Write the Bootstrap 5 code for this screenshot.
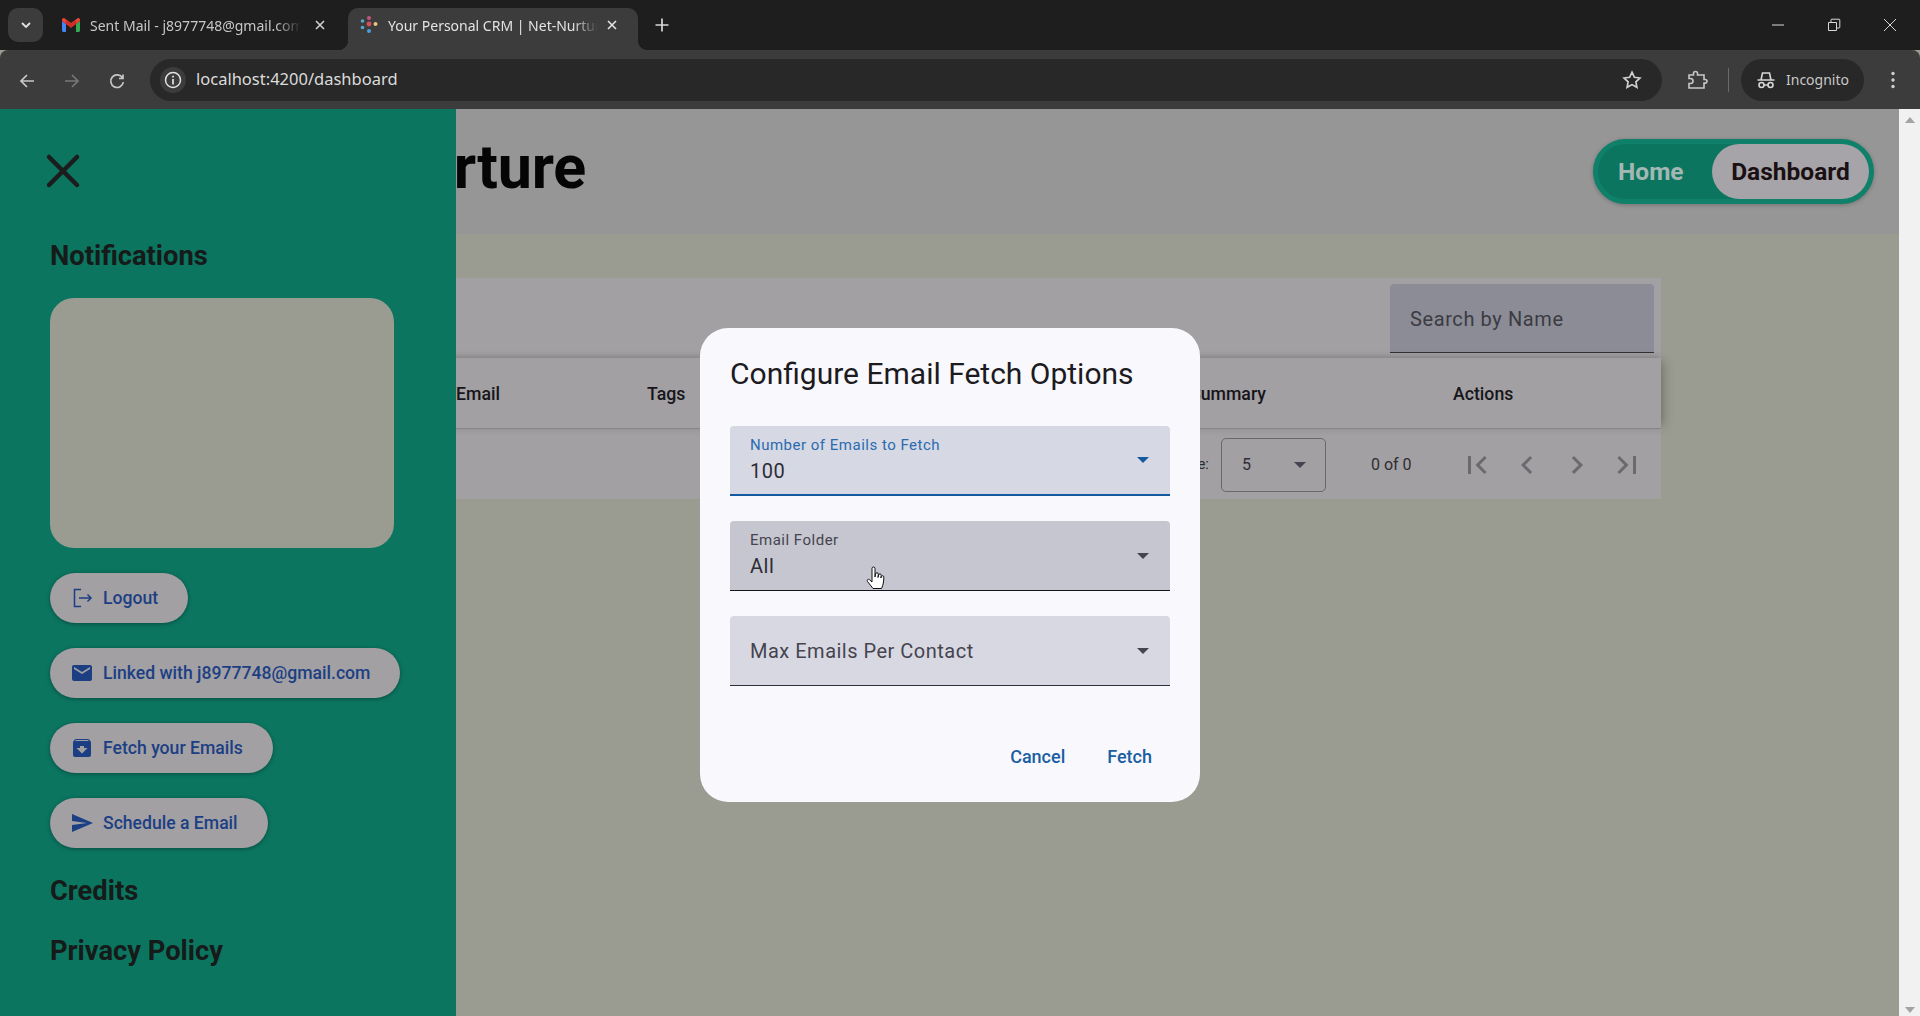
<!DOCTYPE html>
<html lang="en">
<head>
    <meta charset="UTF-8">
    <meta name="viewport" content="width=device-width, initial-scale=1.0">
    <title>Your Personal CRM | Net-Nurture</title>
    <link href="https://cdn.jsdelivr.net/npm/bootstrap@5.3.0/dist/css/bootstrap.min.css" rel="stylesheet">
    <style>
        html, body { height: 100%; overflow: hidden; }
        body { font-family: Roboto, "Liberation Sans", sans-serif; background: #9b9c91; }

        /* browser chrome */
        .tab-strip { height: 50px; background: #1e1e1e; font-family: "Noto Sans", "Open Sans", sans-serif; color: #c7c7c7; }
        .tab-search { width: 35px; height: 34px; margin: 8px 7px 0 8px; background: #3c3c3c; border-radius: 10px; }
        .tab-item { width: 290px; height: 42px; margin-top: 8px; padding: 0 12px 8px; font-size: 14px; white-space: nowrap; border-radius: 10px 10px 0 0; position: relative; }
        .tab-item.first-tab { width: 298px; padding-right: 14px; }
        .tab-item.first-tab .tab-title { margin-right: 13px; }
        .tab-item.current { background: #3c3c3c; color: #e3e3e3; }
        .tab-item.current::before, .tab-item.current::after { content: ""; position: absolute; bottom: 0; width: 10px; height: 10px; }
        .tab-item.current::before { left: -10px; background: radial-gradient(circle at 0 0, transparent 10px, #3c3c3c 10.5px); }
        .tab-item.current::after { right: -10px; background: radial-gradient(circle at 100% 0, transparent 10px, #3c3c3c 10.5px); }
        .tab-title { flex: 1; overflow: hidden; margin-left: 10px; margin-right: 8px; -webkit-mask-image: linear-gradient(90deg, #000 88%, transparent); mask-image: linear-gradient(90deg, #000 88%, transparent); }
        .new-tab { margin: 8px 0 8px 16px; }
        .win-ctrls { margin-right: 2px; }
        .win-btn { width: 56px; }
        .tool-row { height: 59px; background: #3c3c3c; border-radius: 8px 8px 0 0; color: #c7c7c7; font-family: "Noto Sans", "Open Sans", sans-serif; }
        .nav-glyph { width: 45px; }
        .omni { width: 1512px; height: 42px; margin-left: 11px; background: #282828; border-radius: 21px; padding: 0 20px 0 10px; }
        .omni-info { width: 26px; height: 26px; border-radius: 50%; background: #3c3c3c; }
        .omni-url { margin-left: 10px; font-size: 16.5px; color: #dcdcdc; }
        .tool-sep { width: 1px; height: 24px; background: #6a6a6a; margin: 0 12px 0 20px; }
        .incog { width: 123px; height: 42px; border-radius: 21px; background: #282828; font-size: 14px; margin-right: 20px; gap: 10px; padding-left: 15px; }

        /* page behind the dialog */
        .page-wrap { height: 907px; }
        .page-area { width: 1899px; position: relative; overflow: hidden; }
        .scroll-rail { width: 21px; background: #f1f1f1; padding: 8px 0 2px; }
        .top-band { height: 125px; background: #969696; padding-right: 25px; }
        .brand-name { margin: 0; padding-left: 257px; font-size: 61px; font-weight: 700; letter-spacing: -.2px; color: #050505; line-height: 1; padding-top: 28px; }
        .nav-pill-box { height: 65px; width: 281px; margin-top: 30px; background: #0c7560; border: 5px solid #0f8069; border-radius: 33px; box-shadow: 0 1px 4px rgba(0, 0, 0, .25); font-size: 24.5px; font-weight: 700; }
        .nav-pill-box span { line-height: 55px; }
        .home-link { padding-left: 20px; color: #a3b8b2; width: 114px; }
        .dash-link { flex: 1; text-align: center; background: #a6a4a8; color: #1a1014; border-radius: 28px; }
        .main-panel { margin: 44px 238px 0; }
        .search-band { height: 80px; background: #a2a0a3; padding: 6px 7px 0 0; }
        .search-box { width: 264px; height: 69px; background: #8c8c96; border-bottom: 1px solid #333; border-radius: 4px 4px 0 0; padding: 0 20px; font-size: 20px; letter-spacing: .6px; color: #3b3b42; line-height: 71px; }
        .head-row { height: 71px; background: #a2a0a3; border-bottom: 1px solid #86858a; box-shadow: 7px 0 10px -4px rgba(40, 40, 30, .3), 0 -3px 6px -2px rgba(40, 40, 30, .2); font-size: 17.7px; font-weight: 500; color: #17151a; position: relative; line-height: 1; padding-top: 3px; }
        .col-name { width: 218px; }
        .col-email { width: 191px; }
        .col-tags { width: 543px; }
        .col-summary { width: 263px; }
        .foot-row { height: 70px; background: #a2a0a3; font-size: 15px; color: #2e2d32; padding: 1px 16px 0 0; }
        .size-box { width: 105px; height: 54px; border: 1px solid #68676c; border-radius: 5px; padding: 0 19px 0 20px; margin: 0 45px 0 12px; font-size: 16px; }
        .range-text { width: 41px; white-space: nowrap; margin-right: 47px; font-size: 16px; }
        .pager-btns { gap: 14px; color: #6b6a6f; }

        /* side drawer */
        .side-drawer { position: absolute; left: 0; top: 0; bottom: 0; width: 456px; background: #0b7560; padding: 44px 50px 0; color: #161a19; }
        .close-glyph { margin: 0 0 49px -7px; display: block; }
        .side-title { font-size: 27.3px; font-weight: 700; margin: 0; line-height: 36px; }
        .notes-box { width: 344px; height: 250px; background: #9b9c91; border-radius: 24px; margin: 24px 0 25px; }
        .side-actions { gap: 25px; }
        .side-btn { height: 50px; padding: 0 30px 0 20px; background: #a2a0a3; border: 0; color: #1c3f84; font-size: 17.6px; font-weight: 500; border-radius: 25px; box-shadow: 0 1px 4px rgba(0, 0, 0, .35); gap: 9px; white-space: nowrap; }
        .side-btn:hover { background: #a2a0a3; color: #1c3f84; }
        .side-btn svg { width: 24px; height: 24px; flex: none; }
        .credit-title { margin-top: 25px; }
        .policy-title { margin-top: 24px; }

        /* dialog */
        .fetch-dialog { position: absolute; left: 700px; top: 219px; width: 500px; height: 474px; background: #f9f8fc; border-radius: 28px; padding: 20px 30px 0; }
        .fetch-title { font-size: 30px; font-weight: 400; color: #1c1b1f; margin: 6px 0 32px; line-height: 40px; }
        .pick-field { height: 70px; margin-bottom: 25px; padding: 0 21px 0 20px; border-bottom: 1px solid #2f2e3a; border-radius: 4px 4px 0 0; color: #45444f; letter-spacing: .5px; }
        .pick-field.opened { background: #d6d8e3; border-bottom: 2px solid #17599e; }
        .pick-field.opened .pick-label { color: #2a6bb0; }
        .pick-field.hovered { background: #c5c6cf; border-bottom-color: #15141c; }
        .pick-field.empty { background: #d8d8e2; font-size: 20px; }
        .pick-label { font-size: 15px; line-height: 20px; margin-top: -2px; }
        .pick-value { font-size: 20px; line-height: 26px; color: #2e2d35; margin-top: 3px; }
        .pick-arrow { width: 0; height: 0; border-left: 6.500px solid transparent; border-right: 6.500px solid transparent; border-top: 6.500px solid #45444f; }
        .opened .pick-arrow { border-top-color: #17599e; }
        .fetch-actions { gap: 42px; margin-top: 57px; padding-right: 18px; font-size: 18px; font-weight: 500; color: #1a5fa3; }
        .hand-cursor { position: absolute; left: 866px; top: 457px; }
    </style>
</head>
<body>
    <div class="tab-strip d-flex">
        <div class="tab-search d-flex align-items-center justify-content-center">
            <svg width="12" height="12" viewBox="0 0 12 12"><path d="M2 4l4 4 4-4" fill="none" stroke="#e3e3e3" stroke-width="1.8"/></svg>
        </div>
        <div class="tab-item first-tab d-flex align-items-center">
            <svg width="18" height="14" viewBox="0 0 18 14">
                <path d="M0 3v9.5C0 13.3.7 14 1.5 14H4V6z" fill="#4285f4"/>
                <path d="M14 6v8h2.500c.8 0 1.500-.7 1.500-1.500V3z" fill="#34a853"/>
                <path d="M0 3l4 3 5 3.800L14 6l4-3V1.800C18 .3 16.300-.5 15.200.4L9 5 2.800.4C1.700-.5 0 .3 0 1.800z" fill="#ea4335"/>
                <path d="M14 1.800L9 5.500 4 1.800V6l5 3.800L14 6z" fill="#c5221f" opacity=".7"/>
            </svg>
            <span class="tab-title">Sent Mail - j8977748@gmail.com</span>
            <svg width="12" height="12" viewBox="0 0 12 12"><path d="M2 2l8 8M10 2l-8 8" stroke="#d0d0d0" stroke-width="1.600"/></svg>
            <span class="ms-2"></span>
        </div>
        <div class="tab-item current d-flex align-items-center">
            <svg width="18" height="20" viewBox="0 0 18 20">
                <circle cx="9" cy="3" r="2" fill="#c2557f"/><circle cx="9" cy="9" r="2.400" fill="#d84f5f"/><circle cx="9" cy="16" r="2" fill="#4c9fd8"/>
                <circle cx="2.500" cy="6" r="1.800" fill="#5ba7c9"/><circle cx="2.500" cy="12.500" r="1.800" fill="#5ba7c9"/><circle cx="15.500" cy="9" r="2" fill="#ecc27a"/>
            </svg>
            <span class="tab-title">Your Personal CRM | Net-Nurture</span>
            <svg width="12" height="12" viewBox="0 0 12 12"><path d="M2 2l8 8M10 2l-8 8" stroke="#e3e3e3" stroke-width="1.600"/></svg>
            <span class="ms-2"></span>
        </div>
        <div class="new-tab d-flex align-items-center">
            <svg width="16" height="16" viewBox="0 0 16 16"><path d="M8 1.500v13M1.500 8h13" stroke="#d8d8d8" stroke-width="1.700"/></svg>
        </div>
        <div class="win-ctrls ms-auto d-flex align-items-center pb-1">
            <div class="win-btn text-center"><svg width="14" height="14" viewBox="0 0 14 14"><path d="M1 7h12" stroke="#d8d8d8"/></svg></div>
            <div class="win-btn text-center"><svg width="14" height="14" viewBox="0 0 14 14"><path d="M1.500 4.500h8v8h-8zM4 4.500V2a.8.8 0 0 1 .8-.8h7.200a.8.8 0 0 1 .8.8v7.200a.8.8 0 0 1-.8.8H9.500" fill="none" stroke="#d8d8d8"/></svg></div>
            <div class="win-btn text-center"><svg width="14" height="14" viewBox="0 0 14 14"><path d="M1 1l12 12M13 1L1 13" stroke="#d8d8d8"/></svg></div>
        </div>
    </div>

    <div class="tool-row d-flex align-items-center">
        <div class="nav-glyph text-center ms-1"><svg width="18" height="18" viewBox="0 0 18 18"><path d="M16 9H3M9 3L3 9l6 6" fill="none" stroke="#c7c7c7" stroke-width="1.700"/></svg></div>
        <div class="nav-glyph text-center"><svg width="18" height="18" viewBox="0 0 18 18"><path d="M2 9h13M9 3l6 6-6 6" fill="none" stroke="#777" stroke-width="1.700"/></svg></div>
        <div class="nav-glyph text-center"><svg width="18" height="18" viewBox="0 0 18 18"><path d="M14.500 6A6.300 6.300 0 1 0 15.300 10M15 2.500V6.500H11" fill="none" stroke="#c7c7c7" stroke-width="1.700"/></svg></div>
        <div class="omni d-flex align-items-center">
            <div class="omni-info d-flex align-items-center justify-content-center">
                <svg width="18" height="18" viewBox="0 0 18 18"><circle cx="9" cy="9" r="7.500" fill="none" stroke="#e3e3e3" stroke-width="1.500"/><path d="M9 8v5.500M9 4.800v1.600" stroke="#e3e3e3" stroke-width="1.700"/></svg>
            </div>
            <span class="omni-url">localhost:4200/dashboard</span>
            <svg class="ms-auto" width="20" height="20" viewBox="0 0 20 20"><path d="M10 2.200l2.400 5.100 5.500.7-4 3.800 1 5.500-4.900-2.700-4.900 2.700 1-5.500-4-3.800 5.500-.7z" fill="none" stroke="#d0d0d0" stroke-width="1.700"/></svg>
        </div>
        <div class="ms-4 d-flex align-items-center">
            <svg width="22" height="22" viewBox="0 0 22 22"><path d="M3 6h4.500V4.500a2 2 0 0 1 4 0V6H18v4.500h1.200a1.800 1.800 0 0 1 0 3.600H18V19H3v-4.500h1.500a2.500 2.500 0 0 0 0-5H3z" fill="none" stroke="#c7c7c7" stroke-width="1.600"/></svg>
        </div>
        <div class="tool-sep"></div>
        <div class="incog d-flex align-items-center">
            <svg width="20" height="20" viewBox="0 0 20 20"><path d="M1.500 10h17M5 10l1.500-7h7L15 10" fill="none" stroke="#d8d8d8" stroke-width="1.600"/><circle cx="5.500" cy="15" r="2.500" fill="none" stroke="#d8d8d8" stroke-width="1.600"/><circle cx="14.500" cy="15" r="2.500" fill="none" stroke="#d8d8d8" stroke-width="1.600"/><path d="M8 15h4" stroke="#d8d8d8" stroke-width="1.400"/></svg>
            <span>Incognito</span>
        </div>
        <svg width="18" height="20" viewBox="0 0 18 20"><circle cx="9" cy="3.500" r="1.700" fill="#d0d0d0"/><circle cx="9" cy="10" r="1.700" fill="#d0d0d0"/><circle cx="9" cy="16.500" r="1.700" fill="#d0d0d0"/></svg>
    </div>

    <div class="page-wrap d-flex">
        <div class="page-area">
            <div class="top-band d-flex justify-content-between align-items-start">
                <h1 class="brand-name">Net-Nurture</h1>
                <div class="nav-pill-box d-flex">
                    <span class="home-link">Home</span>
                    <span class="dash-link">Dashboard</span>
                </div>
            </div>

            <div class="main-panel">
                <div class="search-band d-flex justify-content-end">
                    <div class="search-box">Search by Name</div>
                </div>
                <div class="head-row d-flex align-items-center">
                    <div class="col-name">Name</div>
                    <div class="col-email">Email</div>
                    <div class="col-tags">Tags</div>
                    <div class="col-summary">Summary</div>
                    <div>Actions</div>
                </div>
                <div class="foot-row d-flex align-items-center justify-content-end">
                    <span>Items per page:</span>
                    <div class="size-box d-flex align-items-center justify-content-between">
                        <span>5</span>
                        <span class="pick-arrow"></span>
                    </div>
                    <span class="range-text">0 of 0</span>
                    <div class="pager-btns d-flex">
                        <svg width="36" height="36" viewBox="0 0 24 24" fill="currentColor"><path d="M18.410 16.590L13.820 12l4.590-4.590L17 6l-6 6 6 6zM6 6h2v12H6z"/></svg>
                        <svg width="36" height="36" viewBox="0 0 24 24" fill="currentColor"><path d="M15.410 7.410L14 6l-6 6 6 6 1.410-1.410L10.830 12z"/></svg>
                        <svg width="36" height="36" viewBox="0 0 24 24" fill="currentColor"><path d="M10 6L8.590 7.410 13.170 12l-4.580 4.580L10 18l6-6z"/></svg>
                        <svg width="36" height="36" viewBox="0 0 24 24" fill="currentColor"><path d="M5.590 7.410L10.180 12l-4.590 4.590L7 18l6-6-6-6zM16 6h2v12h-2z"/></svg>
                    </div>
                </div>
            </div>

            <aside class="side-drawer">
                <svg class="close-glyph" width="44" height="36" viewBox="0 0 44 36"><path d="M6 4l28 28M34 4L6 32" stroke="#1c1c1c" stroke-width="4.500" stroke-linecap="round"/></svg>
                <h2 class="side-title">Notifications</h2>
                <div class="notes-box"></div>
                <div class="side-actions d-flex flex-column align-items-start">
                    <button class="btn side-btn d-flex align-items-center">
                        <svg viewBox="0 0 24 24" fill="none" stroke="currentColor" stroke-width="1.500"><path d="M11 3.500H4.500v17H11M9 12h12M17.500 8.500L21 12l-3.500 3.500"/></svg>
                        <span>Logout</span>
                    </button>
                    <button class="btn side-btn d-flex align-items-center">
                        <svg viewBox="0 0 24 24" fill="currentColor"><path d="M20 4H4c-1.100 0-1.990.9-1.990 2L2 18c0 1.100.9 2 2 2h16c1.100 0 2-.9 2-2V6c0-1.100-.9-2-2-2zm0 4l-8 5-8-5V6l8 5 8-5v2z"/></svg>
                        <span>Linked with j8977748@gmail.com</span>
                    </button>
                    <button class="btn side-btn d-flex align-items-center">
                        <svg viewBox="0 0 24 24" fill="currentColor"><path d="M20.540 5.230l-1.390-1.680C18.880 3.210 18.470 3 18 3H6c-.47 0-.88.21-1.160.55L3.460 5.230C3.170 5.570 3 6.020 3 6.500V19c0 1.100.9 2 2 2h14c1.100 0 2-.9 2-2V6.500c0-.48-.17-.93-.46-1.270zM12 17.500L6.500 12H10v-2h4v2h3.500L12 17.500zM5.120 5l.81-1h12l.94 1H5.120z"/></svg>
                        <span>Fetch your Emails</span>
                    </button>
                    <button class="btn side-btn d-flex align-items-center">
                        <svg viewBox="0 0 24 24" fill="currentColor"><path d="M2.010 21L23 12 2.010 3 2 10l15 2-15 2z"/></svg>
                        <span>Schedule a Email</span>
                    </button>
                </div>
                <h2 class="side-title credit-title">Credits</h2>
                <h2 class="side-title policy-title">Privacy Policy</h2>
            </aside>

            <div class="fetch-dialog">
                <h2 class="fetch-title">Configure Email Fetch Options</h2>
                <div class="pick-field opened d-flex align-items-center justify-content-between">
                    <div>
                        <div class="pick-label">Number of Emails to Fetch</div>
                        <div class="pick-value">100</div>
                    </div>
                    <span class="pick-arrow"></span>
                </div>
                <div class="pick-field hovered d-flex align-items-center justify-content-between">
                    <div>
                        <div class="pick-label">Email Folder</div>
                        <div class="pick-value">All</div>
                    </div>
                    <span class="pick-arrow"></span>
                </div>
                <div class="pick-field empty d-flex align-items-center justify-content-between">
                    <span>Max Emails Per Contact</span>
                    <span class="pick-arrow"></span>
                </div>
                <div class="fetch-actions d-flex justify-content-end">
                    <span>Cancel</span>
                    <span>Fetch</span>
                </div>
            </div>

            <svg class="hand-cursor" width="20" height="27" viewBox="0 0 20 27"><path d="M6 2.500a1.500 1.500 0 0 1 3 0V11l.5-3a1.400 1.400 0 0 1 2.800.3l-.3 3.200.6-2.500a1.300 1.300 0 0 1 2.600.4l-.4 2.600.7-1.500a1.200 1.200 0 0 1 2.300.6c0 4-.5 8-2.300 11.400H7L1.500 15.500c-1-1.300.6-3 2-1.800L6 16z" fill="#fff" stroke="#111" stroke-width="1"/></svg>
        </div>
        <div class="scroll-rail d-flex flex-column justify-content-between align-items-center">
            <svg width="10" height="7" viewBox="0 0 10 7"><path d="M5 0l5 6H0z" fill="#a3a3a3"/></svg>
            <svg width="10" height="7" viewBox="0 0 10 7"><path d="M5 6l5-6H0z" fill="#a3a3a3"/></svg>
        </div>
    </div>
    <script src="https://cdn.jsdelivr.net/npm/bootstrap@5.3.0/dist/js/bootstrap.bundle.min.js"></script>
</body>
</html>
